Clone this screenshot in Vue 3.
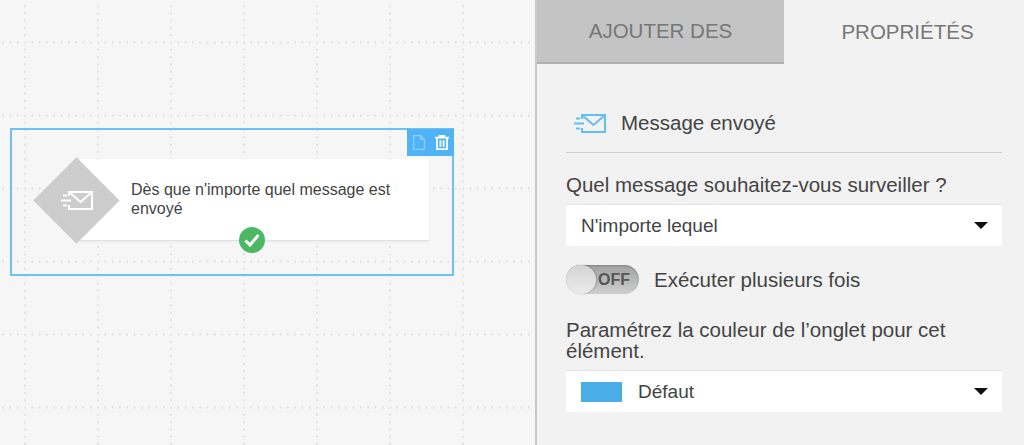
<template>
  <div class="page">
    <div class="canvas">
      <!-- grille pointillée -->
      <svg class="grid" width="535" height="445">
        <defs>
          <pattern id="dots" x="25" y="42.5" width="73" height="73" patternUnits="userSpaceOnUse">
            <g fill="#d0d0d0">
              <rect v-for="n in 10" :key="'h' + n" :x="(n - 1) * 7.3 - 0.75" y="-0.75" width="1.5" height="1.5" />
              <rect v-for="n in 10" :key="'h2' + n" :x="(n - 1) * 7.3 - 0.75" y="72.25" width="1.5" height="1.5" />
              <rect v-for="n in 10" :key="'v' + n" x="-0.75" :y="(n - 1) * 7.3 - 0.75" width="1.5" height="1.5" />
              <rect v-for="n in 10" :key="'v2' + n" x="72.25" :y="(n - 1) * 7.3 - 0.75" width="1.5" height="1.5" />
            </g>
          </pattern>
        </defs>
        <rect width="535" height="445" fill="url(#dots)" />
      </svg>

      <div class="selection">
        <div class="actions">
          <svg width="12" height="15" viewBox="0 0 12 15" fill="none" stroke="#8ed0fa" stroke-width="1.2">
            <path d="M.6.6h7l3.8 3.8v10H.6z" />
            <path d="M7.6.6v3.8h3.8" />
          </svg>
          <svg width="14" height="15" viewBox="0 0 14 15" fill="none" stroke="#fff" stroke-width="1.8">
            <path d="M0 2.6h14M4.6 2.6V.8h4.8v1.8M2 2.6v11.6h10V2.6M5.4 5.2v6.6M8.6 5.2v6.6" />
          </svg>
        </div>
        <div class="node">
          <div class="card">
            <p>Dès que n'importe quel message est envoyé</p>
          </div>
          <div class="diamond"></div>
          <svg class="diamond-icon" width="32" height="19" viewBox="0 0 32 19" fill="none" stroke="#fff" stroke-width="2">
            <path d="M8 5V1h23v17H8v-4M8 1l11.5 10L31 1" />
            <path d="M2 4.5h4M0 9.5h10M2 14.5h4" />
          </svg>
          <div class="check">
            <svg width="16" height="14" viewBox="0 0 16 14" fill="none" stroke="#fff" stroke-width="3">
              <path d="M1.5 7.5l4.5 4.5 8.5-10" />
            </svg>
          </div>
        </div>
      </div>
    </div>

    <div class="panel">
      <div class="tabs">
        <div class="tab inactive">AJOUTER DES</div>
        <div class="tab right">PROPRIÉTÉS</div>
      </div>
      <div class="content">
        <div class="head">
          <svg width="32" height="19" viewBox="0 0 32 19" fill="none" stroke="#62bdf2" stroke-width="2">
            <path d="M8 5V1h23v17H8v-4M8 1l11.5 10L31 1" />
            <path d="M2 4.5h4M0 9.5h10M2 14.5h4" />
          </svg>
          <span>Message envoyé</span>
        </div>
        <label class="label">Quel message souhaitez-vous surveiller ?</label>
        <div class="select">
          <span>N'importe lequel</span>
          <i class="caret"></i>
        </div>
        <div class="switch-row">
          <div class="switch">
            <div class="knob"></div>
            <b>OFF</b>
          </div>
          <span>Exécuter plusieurs fois</span>
        </div>
        <label class="label two">Paramétrez la couleur de l’onglet pour cet élément.</label>
        <div class="select color">
          <span class="swatch"></span>
          <span>Défaut</span>
          <i class="caret"></i>
        </div>
      </div>
    </div>
  </div>
</template>

<script setup>
</script>

<style>
html, body {
  margin: 0;
  overflow: hidden;
}
</style>

<style scoped>
.page {
  display: flex;
  width: 1024px;
  height: 445px;
  overflow: hidden;
  font-family: "Liberation Sans", Arial, sans-serif;
  color: #444;
}

.canvas {
  position: relative;
  flex: 0 0 535px;
  background: #f6f6f6;
}

.grid {
  position: absolute;
  left: 0;
  top: 0;
}

.selection {
  position: absolute;
  left: 10px;
  top: 128px;
  width: 440px;
  height: 144px;
  border: 2px solid #6cc2f3;
}

.actions {
  position: absolute;
  right: -2px;
  top: -1px;
  width: 47px;
  height: 27px;
  background: #4fb3f6;
  display: flex;
  align-items: center;
  justify-content: center;
  gap: 10px;
}

.card {
  position: absolute;
  left: 68px;
  top: 29px;
  width: 349px;
  height: 82px;
  background: #fff;
  border-bottom: 1px solid #e2e2e2;
  box-shadow: 0 1px 2px rgba(0, 0, 0, 0.05);
  box-sizing: border-box;
}

.card p {
  margin: 0;
  position: absolute;
  left: 51px;
  top: 21px;
  width: 280px;
  font-size: 16px;
  line-height: 19px;
  color: #444;
}

.diamond {
  position: absolute;
  left: 34px;
  top: 40px;
  width: 61px;
  height: 61px;
  background: #cdcdcd;
  transform: rotate(45deg);
}

.diamond-icon {
  position: absolute;
  left: 49px;
  top: 61px;
}

.check {
  position: absolute;
  left: 227px;
  top: 97px;
  width: 26px;
  height: 26px;
  border-radius: 50%;
  background: #4cb866;
  display: flex;
  align-items: center;
  justify-content: center;
}

.panel {
  flex: 1;
  min-width: 0;
  display: flex;
  flex-direction: column;
  background: #f2f2f2;
  border-left: 2px solid #c9c9c9;
}

.tabs {
  display: flex;
  height: 64px;
}

.tab {
  flex: 1;
  display: flex;
  align-items: center;
  justify-content: center;
  font-size: 20.5px;
  color: #777;
  box-sizing: border-box;
}

.inactive {
  flex: 0 0 247px;
  background: #c4c4c4;
  border-bottom: 2px solid #b0b0b0;
}

.right {
  padding-left: 7px;
}

.content {
  padding: 0 22px 0 29px;
  display: flex;
  flex-direction: column;
}

.head {
  display: flex;
  align-items: center;
  gap: 15px;
  height: 89px;
  padding: 30px 0 0 8px;
  font-size: 20.5px;
  border-bottom: 1px solid #d0d0d0;
  box-sizing: border-box;
  color: #444;
}

.label {
  margin-top: 21px;
  font-size: 20.5px;
  line-height: 22px;
  color: #444;
}

.select {
  display: flex;
  align-items: center;
  height: 42px;
  margin-top: 8px;
  padding: 0 14px 0 15px;
  background: #fff;
  border-top: 1px solid #e2e2e2;
  box-sizing: border-box;
  font-size: 19px;
  color: #444;
}

.color {
  margin-top: 9px;
}

.caret {
  margin-left: auto;
  width: 0;
  height: 0;
  border-left: 7px solid transparent;
  border-right: 7px solid transparent;
  border-top: 7px solid #111;
}

.swatch {
  width: 41px;
  height: 20px;
  background: #4aaee6;
  margin-right: 16px;
}

.switch-row {
  display: flex;
  align-items: center;
  gap: 15px;
  margin-top: 19px;
  font-size: 20.5px;
  height: 29px;
}

.switch {
  position: relative;
  width: 73px;
  height: 29px;
  border-radius: 15px;
  background: linear-gradient(#a2a2a2, #cfcfcf);
  box-shadow: inset 0 1px 2px rgba(0, 0, 0, 0.2);
}

.switch b {
  position: absolute;
  right: 9px;
  top: 6px;
  font-size: 16px;
  line-height: 18px;
  color: #555;
}

.knob {
  position: absolute;
  left: 0;
  top: 0;
  width: 30px;
  height: 29px;
  border-radius: 50%;
  background: linear-gradient(#d4d4d4, #ebebeb);
  box-shadow: 1px 0 2px rgba(0, 0, 0, 0.2);
}

.two {
  margin-top: 25px;
  line-height: 21px;
}
</style>
